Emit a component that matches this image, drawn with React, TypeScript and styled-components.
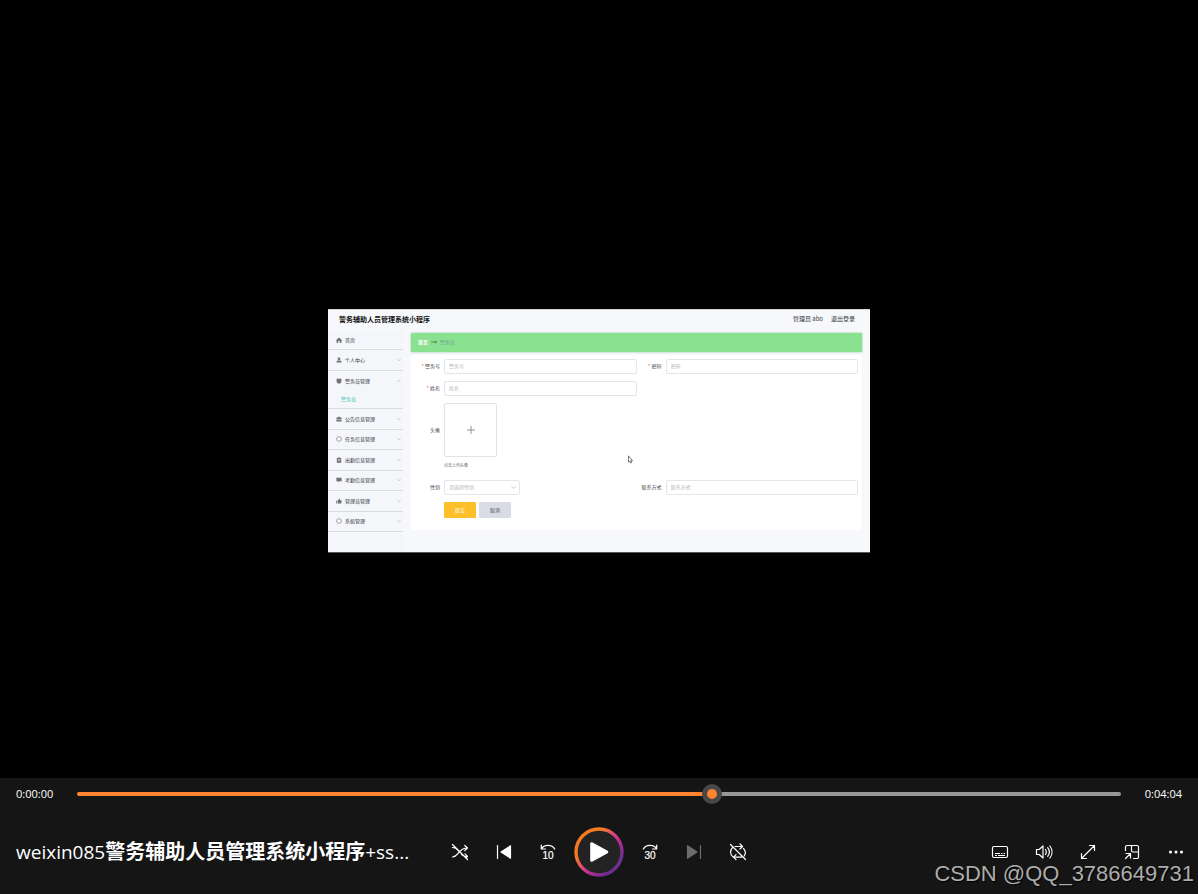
import React, { useState } from 'react';
import styled, { createGlobalStyle } from 'styled-components';

const GlobalStyle = createGlobalStyle`
  * { box-sizing: border-box; }
  body { margin: 0; background: #000; }
  button, input, select { font-family: inherit; margin: 0; }
  ul { list-style: none; margin: 0; padding: 0; }
`;

const Page = styled.div`
  position: relative;
  display: flex;
  flex-direction: column;
  min-height: 100vh;
  overflow: hidden;
  background: #000;
  font-family: 'Open Sans', 'Noto Sans CJK SC', sans-serif;
`;

const Stage = styled.main`
  flex: 1;
  display: flex;
  align-items: center;
  justify-content: center;
  padding-top: 83px;
`;

/* ---------- video frame: admin screen ---------- */

const Frame = styled.section`
  position: relative;
  display: flex;
  flex-direction: column;
  width: 542px;
  max-width: 100%;
  min-height: 243px;
  background: #f6f8fb;
  box-shadow: inset 0 1px 0 #d4d3d8, 0 1px 0 #55585a;
  color: #44474d;
  font-family: 'Noto Sans CJK SC', sans-serif;
  font-size: 5px;
  line-height: 8px;
`;

const FrameHeader = styled.header`
  display: flex;
  align-items: center;
  justify-content: space-between;
  height: 21px;
  padding: 0 15px 2px 11px;
`;

const FrameTitle = styled.h1`
  margin: 0;
  color: #111;
  font-size: 7px;
  font-weight: 700;
`;

const Account = styled.div`
  display: flex;
  gap: 8px;
  color: #33363b;
  font-size: 6px;
`;

const AccountLink = styled.a`
  color: inherit;
  text-decoration: none;
`;

const FrameBody = styled.div`
  flex: 1;
  display: flex;
`;

const Sidebar = styled.nav`
  display: flex;
  width: 75px;
  padding-bottom: 20px;
  background: #f4f6fa;
`;

const Menu = styled.ul`
  flex: 1;
  display: flex;
  flex-direction: column;
`;

const MenuItem = styled.li`
  flex: 1 0 auto;
  display: flex;
  flex-direction: column;
  border-bottom: 1px solid #d8dbe0;
`;

const MenuLink = styled.a`
  flex: 1;
  display: flex;
  align-items: center;
  gap: 3px;
  padding: 0 2px 0 8px;
  color: #33363b;
  text-decoration: none;
`;

const MenuLabel = styled.span`
  flex: 1;
`;

const SubLink = styled.a`
  height: 18px;
  padding: 5px 0 0 13px;
  color: #3fc2b8;
  text-decoration: none;
`;

const Content = styled.div`
  flex: 1;
  min-width: 0;
  padding: 3px 8px 22px;
`;

const Breadcrumb = styled.div`
  display: flex;
  align-items: center;
  gap: 3px;
  height: 19px;
  margin-bottom: 3px;
  padding: 0 7px 2px;
  border-radius: 1px;
  background: #8ae18f;
  box-shadow: 0 0 2px #7fbf8a;
  color: #76a09c;
`;

const CrumbHome = styled.a`
  color: #fff;
  font-weight: 700;
  text-decoration: none;
`;

const Form = styled.form`
  display: grid;
  grid-template-columns: 1fr 1fr;
  row-gap: 7px;
  padding: 4px 4px 12px;
  background: #fff;
`;

const Field = styled.div<{ $wide?: boolean }>`
  display: flex;
  grid-column: ${(p) => (p.$wide ? '1 / -1' : 'auto')};
`;

const Label = styled.label<{ $tall?: boolean }>`
  width: 29px;
  padding-right: 4px;
  line-height: ${(p) => (p.$tall ? 54 : 14)}px;
  text-align: right;
  white-space: nowrap;
`;

const Star = styled.span`
  color: #e0584f;
`;

const TextInput = styled.input`
  flex: 1;
  min-width: 0;
  height: 15px;
  padding: 0 4px 2px;
  border: 1px solid #e4e6eb;
  border-radius: 2px;
  background: #fff;
  outline: none;
  font-size: 5px;
  &::placeholder { color: #b4b7be; opacity: 1; }
`;

const SelectBox = styled.div`
  display: grid;
  align-items: center;
  width: 76px;
  & > * { grid-area: 1 / 1; }
  & > svg { justify-self: end; margin-right: 4px; pointer-events: none; }
`;

const Select = styled.select`
  width: 100%;
  height: 15px;
  padding: 0 4px 2px;
  border: 1px solid #e4e6eb;
  border-radius: 2px;
  background: #fff;
  color: #b4b7be;
  font-size: 5px;
  appearance: none;
`;

const UploadColumn = styled.div`
  line-height: 16px;
`;

const UploadButton = styled.button`
  display: flex;
  align-items: center;
  justify-content: center;
  width: 53px;
  height: 54px;
  padding: 0;
  border: 1px solid #e1e3e8;
  border-radius: 2px;
  background: #fff;
`;

const UploadHint = styled.div`
  height: 16px;
  color: #5a5d63;
  font-size: 4px;
`;

const Actions = styled.div`
  grid-column: 1 / -1;
  display: flex;
  gap: 3px;
  padding-left: 29px;
`;

const ActionButton = styled.button<{ $primary?: boolean }>`
  width: 32px;
  height: 16px;
  padding: 0 0 2px;
  border: 0;
  border-radius: 1px;
  background: ${(p) => (p.$primary ? '#fec02a' : '#d9dce4')};
  color: ${(p) => (p.$primary ? '#fff' : '#44474d')};
  font-size: 5px;
`;

const Pointer = styled.svg`
  position: absolute;
  left: 300px;
  top: 146px;
`;

/* ---------- player controls ---------- */

const PlayerBar = styled.footer`
  background: #151515;
  color: #fff;
`;

const SeekRow = styled.div`
  display: grid;
  grid-template-columns: 61px 1fr 61px;
  align-items: center;
  height: 32px;
  padding: 0 16px;
  font-size: 11px;
  line-height: 16px;
`;

const Time = styled.span<{ $end?: boolean }>`
  text-align: ${(p) => (p.$end ? 'right' : 'left')};
`;

const Seek = styled.input`
  appearance: none;
  width: 100%;
  height: 20px;
  background: transparent;
  outline: none;
  &::-webkit-slider-runnable-track {
    height: 4px;
    border-radius: 2px;
    background: linear-gradient(to right, #ff8431 var(--played), #979797 var(--played));
  }
  &::-webkit-slider-thumb {
    appearance: none;
    width: 20px;
    height: 20px;
    margin-top: -8px;
    border: 5px solid #484848;
    border-radius: 50%;
    background: #ff8431;
  }
`;

const ControlRow = styled.div`
  display: grid;
  grid-template-columns: 1fr auto 1fr;
  align-items: center;
  height: 84px;
`;

const VideoTitle = styled.h2`
  min-width: 0;
  margin: 0;
  padding-left: 16px;
  overflow: hidden;
  white-space: nowrap;
  font-size: 20px;
  font-weight: 700;
  line-height: 28px;
`;

const Latin = styled.span`
  font-size: 19px;
  font-weight: 500;
`;

const ButtonGroup = styled.div<{ $end?: boolean }>`
  display: flex;
  align-items: center;
  justify-content: ${(p) => (p.$end ? 'flex-end' : 'center')};
`;

const IconButton = styled.button`
  display: flex;
  align-items: center;
  justify-content: center;
  width: 44px;
  height: 40px;
  padding: 0;
  border: 0;
  background: none;
  color: #fff;
  &:disabled { color: #6c6c6c; }
`;

const PlayButton = styled(IconButton)`
  width: 58px;
  height: 50px;
`;

const Watermark = styled.div`
  position: absolute;
  right: 4px;
  bottom: 7px;
  color: #adadad;
  font-family: 'Liberation Sans', sans-serif;
  font-size: 22px;
  line-height: 26px;
  text-shadow: 1px 1px 1px #000;
  pointer-events: none;
`;

/* ---------- drawings ---------- */

const Glyph = ({ children }: { children: React.ReactNode }) => (
  <svg width="18" height="18" viewBox="0 0 18 18" fill="none" stroke="currentColor" strokeWidth="1.2" strokeLinecap="round" strokeLinejoin="round" aria-hidden="true">
    {children}
  </svg>
);

const SkipSeconds = ({ children }: { children: string }) => (
  <text x="9" y="16" textAnchor="middle" fontFamily="'Liberation Sans', sans-serif" fontSize="10" fill="currentColor" stroke="currentColor" strokeWidth=".2">
    {children}
  </text>
);

const menuIcons: Record<string, React.ReactNode> = {
  home: <path d="M0 3.2 3 .5l3 2.7-.6.5V6H3.8V4H2.2v2H.6V3.700z" />,
  user: <path d="M3 .4a1.400 1.400 0 1 1 0 2.800A1.400 1.400 0 0 1 3 .4zM.5 5.600V4.800C.5 4 1.500 3.600 3 3.600s2.500.4 2.500 1.200v.8z" />,
  shield: <path d="M.6.800h4.800v2.400C5.400 4.600 4.300 5.300 3 5.700 1.700 5.300.6 4.600.6 3.200z" />,
  bag: <path d="M2 1.600V.700h2v.900h1.600v1.600H.4V1.600zM.4 3.700h5.200v1.900H.4z" />,
  clip: <path fillRule="evenodd" d="M.8 1h1.200V.4h2V1h1.200v4.700H.8zM1.800 2.200v.5h2.400v-.5zm0 1.300V4h2.400v-.5z" />,
  chat: <path d="M.4.700h5.200v3.600H3.400L2.200 5.500V4.300H.4z" />,
  like: <path d="M.3 2.600h1.200v3H.3zM2 2.500 3.200.6l.8.400-.3 1.200h2l-.5 3.400H2z" />,
  ring: <circle cx="3" cy="3" r="2.400" fill="none" stroke="currentColor" strokeWidth=".6" />,
};

const Chevron = ({ up, size = 4 }: { up?: boolean; size?: number }) => (
  <svg width={size} height={size} viewBox="0 0 4 4" fill="none" stroke="#a3a6ad" strokeWidth=".5" aria-hidden="true">
    <path d={up ? 'M.3 2.800 2 1.200l1.700 1.600' : 'M.3 1.200 2 2.800l1.700-1.600'} />
  </svg>
);

const menu = [
  { label: '首页', icon: 'home' },
  { label: '个人中心', icon: 'user', more: true },
  { label: '警务员管理', icon: 'shield', more: true, sub: '警务员' },
  { label: '公告信息管理', icon: 'bag', more: true },
  { label: '任务信息管理', icon: 'ring', more: true },
  { label: '出勤信息管理', icon: 'clip', more: true },
  { label: '考勤信息管理', icon: 'chat', more: true },
  { label: '管理员管理', icon: 'like', more: true },
  { label: '系统管理', icon: 'ring', more: true },
];

const AdminScreen = () => (
  <Frame>
    <FrameHeader>
      <FrameTitle>警务辅助人员管理系统小程序</FrameTitle>
      <Account>
        <span>管理员 abo</span>
        <AccountLink href="#logout">退出登录</AccountLink>
      </Account>
    </FrameHeader>
    <FrameBody>
      <Sidebar>
        <Menu>
          {menu.map((m) => (
            <MenuItem key={m.label}>
              <MenuLink href="#menu">
                <svg width="6" height="6" viewBox="0 0 6 6" fill="currentColor" color="#6f7278" aria-hidden="true">{menuIcons[m.icon]}</svg>
                <MenuLabel>{m.label}</MenuLabel>
                {m.more && <Chevron up={Boolean(m.sub)} />}
              </MenuLink>
              {m.sub && <SubLink href="#officer">{m.sub}</SubLink>}
            </MenuItem>
          ))}
        </Menu>
      </Sidebar>
      <Content>
        <Breadcrumb>
          <CrumbHome href="#home">首页</CrumbHome>
          <svg width="6" height="4" viewBox="0 0 6 4" fill="none" stroke="#3f6b48" strokeWidth=".7" aria-hidden="true"><path d="M0 2h5.500M4 .8 5.500 2 4 3.200" /></svg>
          <span>警务员</span>
        </Breadcrumb>
        <Form onSubmit={(e) => e.preventDefault()}>
          <Field>
            <Label htmlFor="code"><Star>* </Star>警务号</Label>
            <TextInput id="code" placeholder="警务号" />
          </Field>
          <Field>
            <Label htmlFor="password"><Star>* </Star>密码</Label>
            <TextInput id="password" type="password" placeholder="密码" />
          </Field>
          <Field>
            <Label htmlFor="name"><Star>* </Star>姓名</Label>
            <TextInput id="name" placeholder="姓名" />
          </Field>
          <Field $wide>
            <Label htmlFor="avatar" $tall>头像</Label>
            <UploadColumn>
              <UploadButton id="avatar" type="button" aria-label="上传头像">
                <svg width="8" height="8" viewBox="0 0 8 8" stroke="#777a80" strokeWidth=".8" aria-hidden="true"><path d="M4 0v8M0 4h8" /></svg>
              </UploadButton>
              <UploadHint>点击上传头像</UploadHint>
            </UploadColumn>
          </Field>
          <Field>
            <Label htmlFor="gender">性别</Label>
            <SelectBox>
              <Select id="gender" defaultValue=""><option value="">请选择性别</option></Select>
              <Chevron size={5} />
            </SelectBox>
          </Field>
          <Field>
            <Label htmlFor="phone">联系方式</Label>
            <TextInput id="phone" placeholder="联系方式" />
          </Field>
          <Actions>
            <ActionButton type="submit" $primary>提交</ActionButton>
            <ActionButton type="button">取消</ActionButton>
          </Actions>
        </Form>
      </Content>
    </FrameBody>
    <Pointer width="5" height="9" viewBox="0 0 5 9" fill="#fff" stroke="#444" strokeWidth=".7" aria-hidden="true">
      <path d="M.5.8v6.400l1.300-1.200.9 2 .9-.4-.8-2h1.700z" />
    </Pointer>
  </Frame>
);

export default function App() {
  const [position, setPosition] = useState(620);
  const played = `calc(10px + (100% - 20px) * ${position / 1016})`;

  return (
    <Page>
      <GlobalStyle />
      <Stage>
        <AdminScreen />
      </Stage>
      <PlayerBar>
        <SeekRow>
          <Time>0:00:00</Time>
          <Seek
            type="range"
            aria-label="Seek"
            min={0}
            max={1016}
            value={position}
            onChange={(e) => setPosition(Number(e.target.value))}
            style={{ '--played': played } as React.CSSProperties}
          />
          <Time $end>0:04:04</Time>
        </SeekRow>
        <ControlRow>
          <VideoTitle><Latin>weixin085</Latin>警务辅助人员管理系统小程序<Latin>+ss...</Latin></VideoTitle>
          <ButtonGroup>
            <IconButton aria-label="Shuffle off">
              <Glyph>
                <path d="M1.500 1.500 16.500 16.500M1.500 4.500C4.500 4.500 6 6 7.500 8M1.500 14C8 13.500 7 5 16.500 5M13.800 2.500 16.500 5l-2.700 2.500M10.500 11.500c1.500 1.500 3 1.800 6 1.800M14 10.800l2.500 2.500-1.200 1.200" />
              </Glyph>
            </IconButton>
            <IconButton aria-label="Previous">
              <Glyph>
                <path d="M2.500 2.500v13" />
                <path d="M15.500 2.800v12.400L6 9z" fill="currentColor" />
              </Glyph>
            </IconButton>
            <IconButton aria-label="Back 10 seconds">
              <Glyph>
                <path d="M2.300 2v4h4.200M2.500 5.800C5 1.200 13 1.200 15.700 6" />
                <SkipSeconds>10</SkipSeconds>
              </Glyph>
            </IconButton>
            <PlayButton aria-label="Play">
              <svg width="50" height="50" viewBox="0 0 50 50" aria-hidden="true">
                <defs>
                  <linearGradient id="ring" x1="0.1" y1="0.15" x2="0.85" y2="0.85">
                    <stop offset="0.25" stopColor="#f57a22" />
                    <stop offset="0.45" stopColor="#dd5070" />
                    <stop offset="0.62" stopColor="#c0308f" />
                    <stop offset="0.95" stopColor="#6f2d91" />
                  </linearGradient>
                </defs>
                <circle cx="25" cy="25" r="23" fill="#232323" stroke="url(#ring)" strokeWidth="3.400" />
                <path d="M17.500 16.500v17L33 25z" fill="#fff" stroke="#fff" strokeWidth="2.600" strokeLinejoin="round" />
              </svg>
            </PlayButton>
            <IconButton aria-label="Forward 30 seconds">
              <Glyph>
                <path d="M15.700 2v4h-4.200M15.500 5.800C13 1.200 5 1.200 2.300 6" />
                <SkipSeconds>30</SkipSeconds>
              </Glyph>
            </IconButton>
            <IconButton aria-label="Next" disabled>
              <Glyph>
                <path d="M15.500 2.500v13" />
                <path d="M2.500 2.800v12.400L12 9z" fill="currentColor" />
              </Glyph>
            </IconButton>
            <IconButton aria-label="Repeat off">
              <Glyph>
                <path d="M1.500 1.500 16.500 16.500M6 3.500h7.500M11 1l2.500 2.500L11 6M14.500 5.500c2.300 2.400 2.300 5.100.700 7.500M3.200 5C1 7.500 1 11.500 3.700 13.500M12.500 14.200H4.500M7 11.700 4.500 14.200 7 16.700" />
              </Glyph>
            </IconButton>
          </ButtonGroup>
          <ButtonGroup $end>
            <IconButton aria-label="Captions">
              <Glyph>
                <rect x="1.500" y="3.500" width="15" height="11" rx="1.500" />
                <path d="M4 10.500h5M10 10.500h1.500M12.500 10.500H14M4 12.500h2M7 12.500h7" strokeWidth="1" strokeLinecap="butt" />
              </Glyph>
            </IconButton>
            <IconButton aria-label="Volume">
              <Glyph>
                <path d="M1.500 6.500h2.700L8 3v12l-3.800-3.500H1.500zM10.500 6.500c1 1.500 1 3.500 0 5M12.700 4.700c2 2.500 2 6 0 8.600M14.900 3c2.800 3.600 2.800 8.400 0 12" />
              </Glyph>
            </IconButton>
            <IconButton aria-label="Full screen">
              <Glyph>
                <path d="M2.500 15.500l13-13M10.500 2.500h5v5M2.500 10.500v5h5" />
              </Glyph>
            </IconButton>
            <IconButton aria-label="Mini player">
              <Glyph>
                <path d="M2.500 7.500v-3.500a1.500 1.500 0 0 1 1.500-1.500h10a1.500 1.500 0 0 1 1.500 1.500v10a1.500 1.500 0 0 1-1.500 1.500h-3.500M8.500 2.500v5a1.500 1.500 0 0 0 1.500 1.500h5.500M2.500 15.500l5-5M3 10.500h4.500V15" />
              </Glyph>
            </IconButton>
            <IconButton aria-label="More">
              <Glyph>
                <g fill="currentColor" stroke="none">
                  <circle cx="3.500" cy="9" r="1.500" />
                  <circle cx="9" cy="9" r="1.500" />
                  <circle cx="14.500" cy="9" r="1.500" />
                </g>
              </Glyph>
            </IconButton>
          </ButtonGroup>
        </ControlRow>
      </PlayerBar>
      <Watermark>CSDN @QQ_3786649731</Watermark>
    </Page>
  );
}
